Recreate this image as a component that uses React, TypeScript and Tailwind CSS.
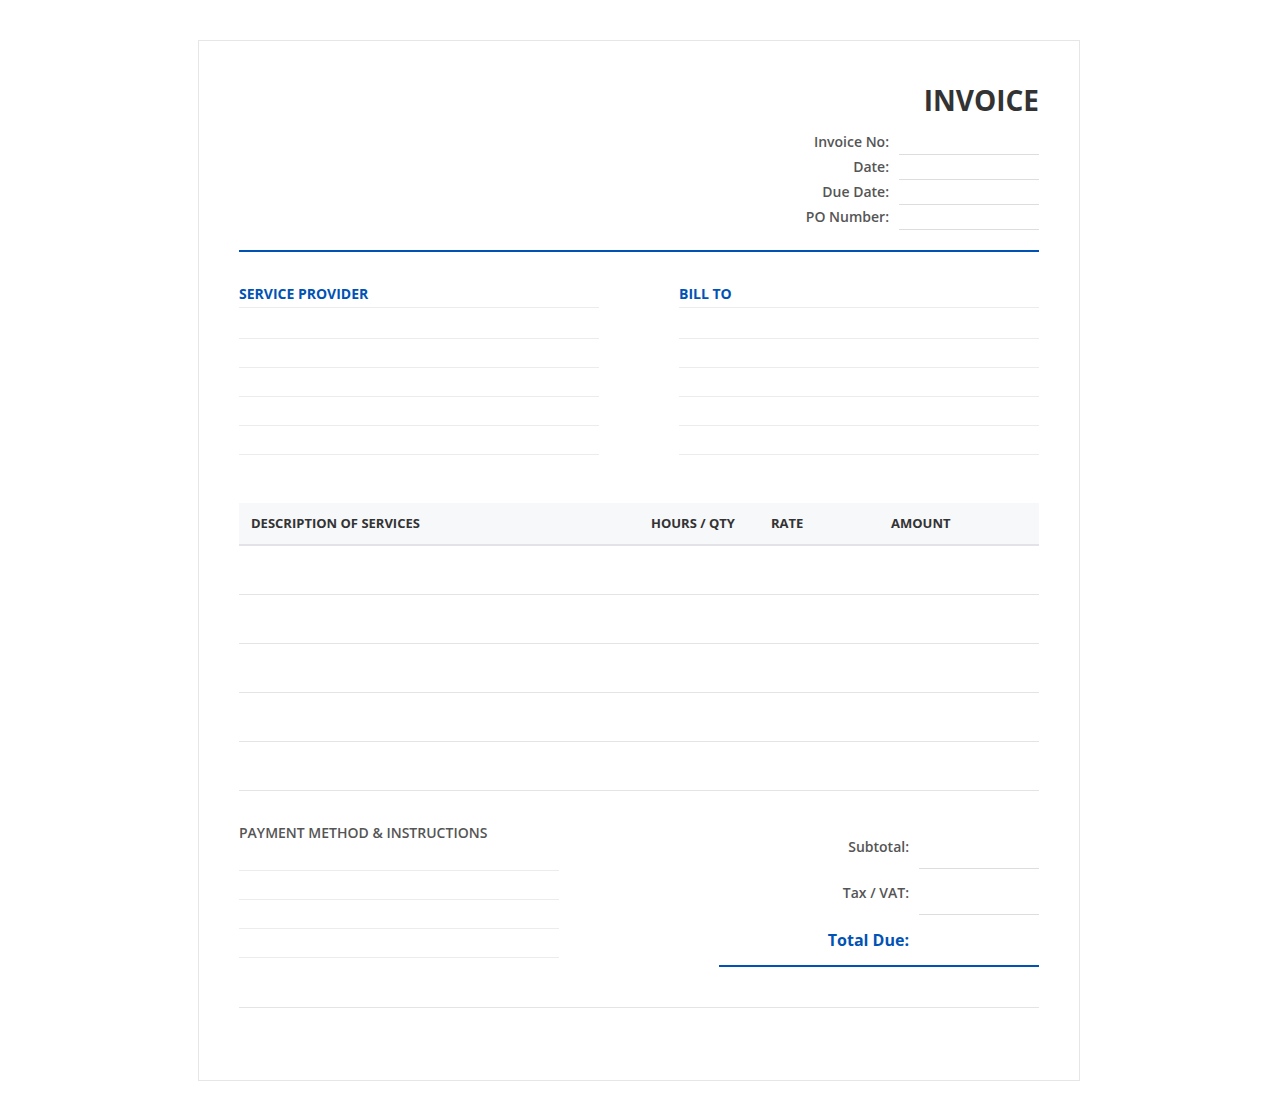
export default function App() {
  const meta = ["Invoice No:", "Date:", "Due Date:", "PO Number:"];
  const lines = [0, 1, 2, 3, 4];
  const Col = ({ title }: { title: string }) => (
    <div className="w-[360px]">
      <div className="text-[14px] leading-[19px] font-bold text-[#0052b4] pb-1 border-b border-[#ececec]">{title}</div>
      {lines.map((i) => (
        <div key={i} className={`${i === 0 ? "h-[31px]" : "h-[29px]"} border-b border-[#ececec]`} />
      ))}
    </div>
  );
  return (
    <div className="min-h-[1118px] bg-white pt-10 pb-10" style={{ fontFamily: '"Open Sans", sans-serif' }}>
      <div className="ml-[198px] w-[882px] border border-[#e6e6e6] px-10 pt-10 pb-[72px] text-[#333]">
        <div className="pb-5 border-b-2 border-[#0052b4]">
          <div className="text-right text-[28px] leading-[38px] font-bold text-[#333] mb-[11px]">INVOICE</div>
          {meta.map((m) => (
            <div key={m} className="flex justify-end h-[25px]">
              <div className="text-[14px] font-semibold text-[#555] leading-[24px] pr-[10px]">{m}</div>
              <div className="w-[140px] border-b border-[#dddddd]" />
            </div>
          ))}
        </div>
        <div className="mt-8 flex justify-between">
          <Col title="SERVICE PROVIDER" />
          <Col title="BILL TO" />
        </div>
        <div className="mt-12">
          <div className="flex h-[43px] items-center bg-[#f7f8fa] border-b-2 border-[#e2e3e6] text-[13px] font-bold text-[#333]">
            <div className="w-[400px] pl-3">DESCRIPTION OF SERVICES</div>
            <div className="w-[120px] pl-3">HOURS / QTY</div>
            <div className="w-[120px] pl-3">RATE</div>
            <div className="w-[160px] pl-3">AMOUNT</div>
          </div>
          {lines.map((i) => (
            <div key={i} className="h-[49px] border-b border-[#e4e4e7]" />
          ))}
        </div>
        <div className="mt-8 flex justify-between">
          <div className="w-[320px]">
            <div className="text-[14px] leading-[19px] font-semibold text-[#555]">PAYMENT METHOD &amp; INSTRUCTIONS</div>
            {[0, 1, 2, 3].map((i) => (
              <div key={i} className="h-[29px] border-b border-[#ececec]" />
            ))}
          </div>
          <div className="w-[320px]">
            {["Subtotal:", "Tax / VAT:"].map((t) => (
              <div key={t} className="flex h-[46px]">
                <div className="flex-1 flex items-center justify-end pr-[10px] text-[14px] font-semibold text-[#555]">{t}</div>
                <div className="w-[120px] border-b border-[#dddddd]" />
              </div>
            ))}
            <div className="flex h-[52px] items-center border-b-2 border-[#0052b4]">
              <div className="flex-1 text-right pr-[130px] text-[16px] font-bold text-[#0052b4]">Total Due:</div>
            </div>
          </div>
        </div>
        <div className="mt-10 border-b border-[#e4e4e7]" />
      </div>
    </div>
  );
}
